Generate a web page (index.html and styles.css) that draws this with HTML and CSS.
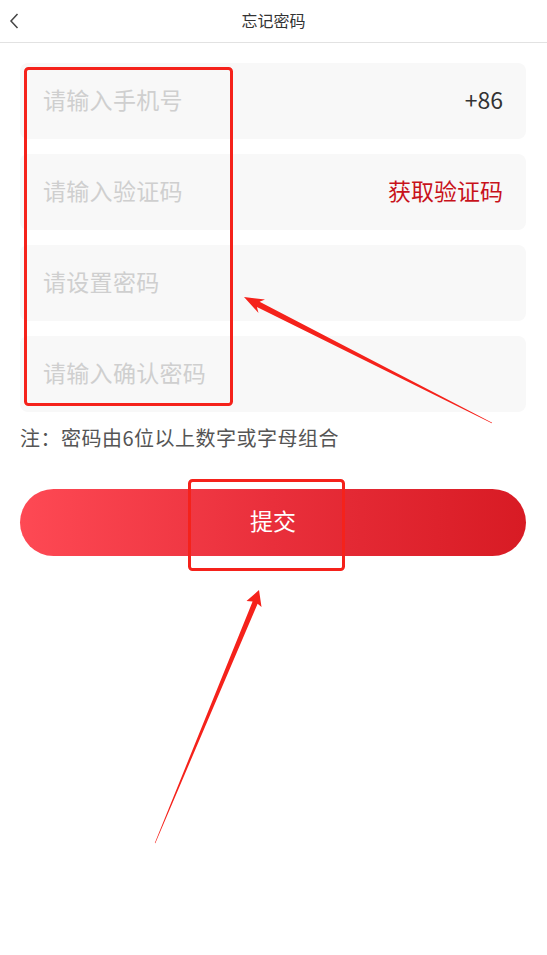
FILE: index.html
```html
<!DOCTYPE html>
<html lang="zh">
<head>
<meta charset="utf-8">
<title>忘记密码</title>
<link rel="stylesheet" href="styles.css">
</head>
<body>
<div class="page">
  <header class="nav">
    <span class="back">
      <svg width="12" height="16" viewBox="0 0 12 16"><path d="M9.5 1 L3 8 L9.5 15" fill="none" stroke="#444" stroke-width="1.5"/></svg>
    </span>
    <h1 class="title">忘记密码</h1>
  </header>
  <main class="form">
    <div class="field"><span class="ph">请输入手机号</span><span class="code">+86</span></div>
    <div class="field"><span class="ph">请输入验证码</span><span class="getcode">获取验证码</span></div>
    <div class="field"><span class="ph">请设置密码</span></div>
    <div class="field"><span class="ph">请输入确认密码</span></div>
    <p class="note">注：密码由6位以上数字或字母组合</p>
    <button class="submit">提交</button>
  </main>
  <svg class="marks" width="547" height="955" viewBox="0 0 547 955">
    <rect x="25.5" y="68.5" width="206" height="336" rx="3" fill="none" stroke="#f5221b" stroke-width="3"/>
    <rect x="189.5" y="480.5" width="154" height="89" rx="3" fill="none" stroke="#f5221b" stroke-width="3"/>
    <polygon fill="#f5221b" points="244,297 265,299.5 259.6,301.8 492.2,422.8 491.8,423.2 256.9,306.9 258.5,313"/>
    <polygon fill="#f5221b" points="259,590 261.5,607 257.6,603.8 155.3,843.2 154.8,843 252.6,601.5 246.5,601"/>
  </svg>
</div>
</body>
</html>
```
FILE: styles.css
```css
* { box-sizing: border-box; }
html, body { margin: 0; padding: 0; background: #fff; }
body { font-family: "Noto Sans CJK SC", "Noto Sans", sans-serif; }
.page { position: relative; width: 547px; min-height: 955px; }
.nav {
  height: 43px;
  border-bottom: 1px solid #e2e2e2;
  display: flex;
  align-items: center;
  justify-content: center;
  position: relative;
  padding-bottom: 2px;
}
.back { position: absolute; left: 8px; top: 13px; display: flex; }
.title { margin: 0; font-size: 16px; font-weight: 400; color: #333; line-height: 20px; }
.form { padding: 20px 21px 0 20px; display: flex; flex-direction: column; }
.field {
  height: 76px;
  background: #f8f8f8;
  border-radius: 8px;
  display: flex;
  align-items: center;
  justify-content: space-between;
  padding: 0 23px 5px 23px;
  margin-bottom: 15px;
  font-size: 23px;
}
.field:nth-of-type(4) { margin-bottom: 0; }
.ph { color: #cfcfcf; letter-spacing: 0.3px; }
.code { color: #333; }
.getcode { color: #c8121b; }
.note { margin: 12px 0 0 0; font-size: 20px; line-height: 28px; color: #555; letter-spacing: 0.5px; }
.submit {
  margin-top: 37px;
  height: 67px;
  border: none;
  border-radius: 34px;
  background: linear-gradient(90deg, #fe4954 0%, #e92f3b 50%, #d81b24 100%);
  color: #fff;
  font-family: inherit;
  font-size: 23px;
  padding: 0 0 6px 0;
}
.marks { position: absolute; left: 0; top: 0; pointer-events: none; }
```
